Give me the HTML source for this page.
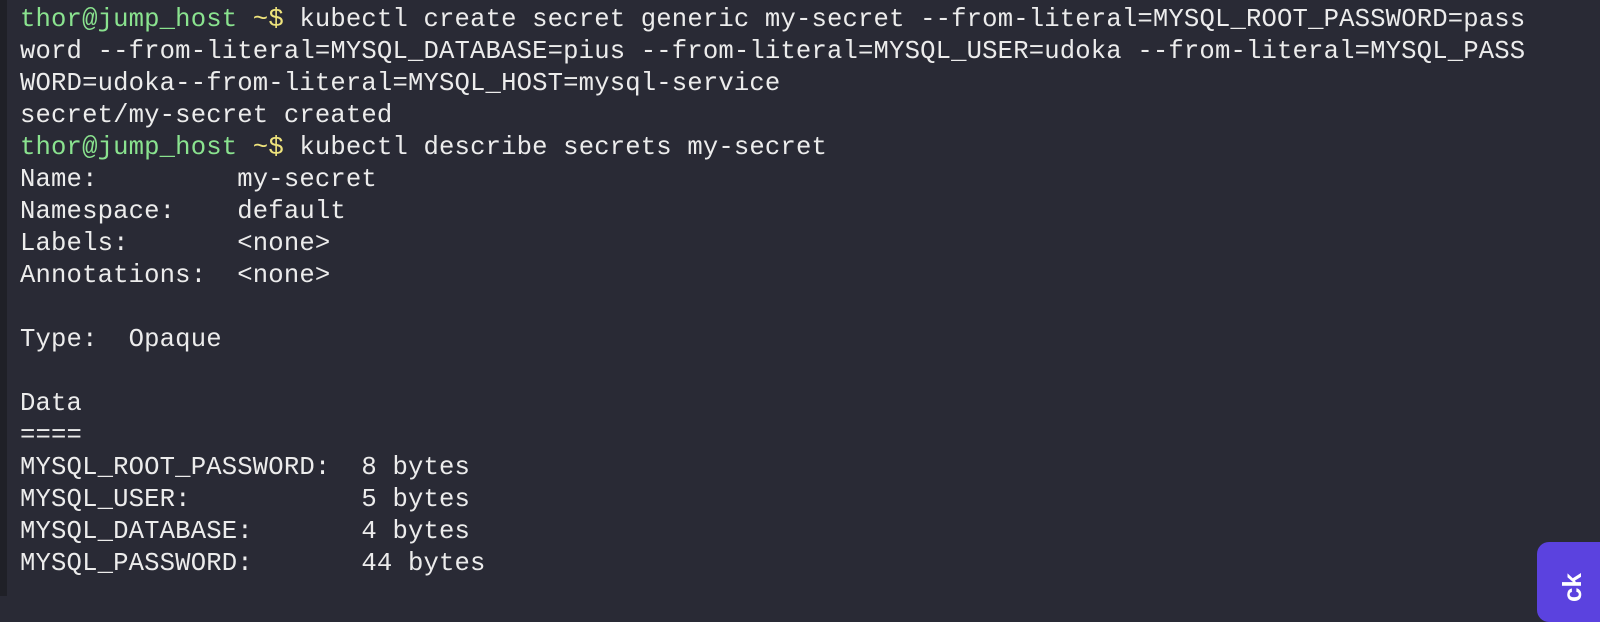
<!DOCTYPE html>
<html><head><meta charset="utf-8"><style>
html,body{margin:0;padding:0;}
body{width:1600px;height:596px;overflow:hidden;background:#292a35;position:relative;}
.edge{position:absolute;left:0;top:0;width:7px;height:596px;background:#1f2027;}
pre{position:absolute;left:20px;top:4px;margin:0;font-family:"Liberation Mono","DejaVu Sans Mono",monospace;font-size:25.6px;letter-spacing:0.16px;line-height:32px;color:#ececec;}
.g{color:#8ae38f;}.y{color:#eee37c;}
.btn{position:absolute;left:1537px;top:542px;width:80px;height:80px;background:#5b42df;border-radius:12px;}
.btn span{position:absolute;left:20px;top:60px;color:#fff;font:600 26px "Liberation Sans",sans-serif;transform:rotate(-90deg);transform-origin:left top;}
</style></head><body>
<div class="edge"></div>
<pre><span class="g">thor@jump_host</span> <span class="y">~$</span> kubectl create secret generic my-secret --from-literal=MYSQL_ROOT_PASSWORD=pass
word --from-literal=MYSQL_DATABASE=pius --from-literal=MYSQL_USER=udoka --from-literal=MYSQL_PASS
WORD=udoka--from-literal=MYSQL_HOST=mysql-service
secret/my-secret created
<span class="g">thor@jump_host</span> <span class="y">~$</span> kubectl describe secrets my-secret
Name:         my-secret
Namespace:    default
Labels:       &lt;none&gt;
Annotations:  &lt;none&gt;

Type:  Opaque

Data
====
MYSQL_ROOT_PASSWORD:  8 bytes
MYSQL_USER:           5 bytes
MYSQL_DATABASE:       4 bytes
MYSQL_PASSWORD:       44 bytes
</pre>
<div class="btn"><span>ck</span></div>
</body></html>
